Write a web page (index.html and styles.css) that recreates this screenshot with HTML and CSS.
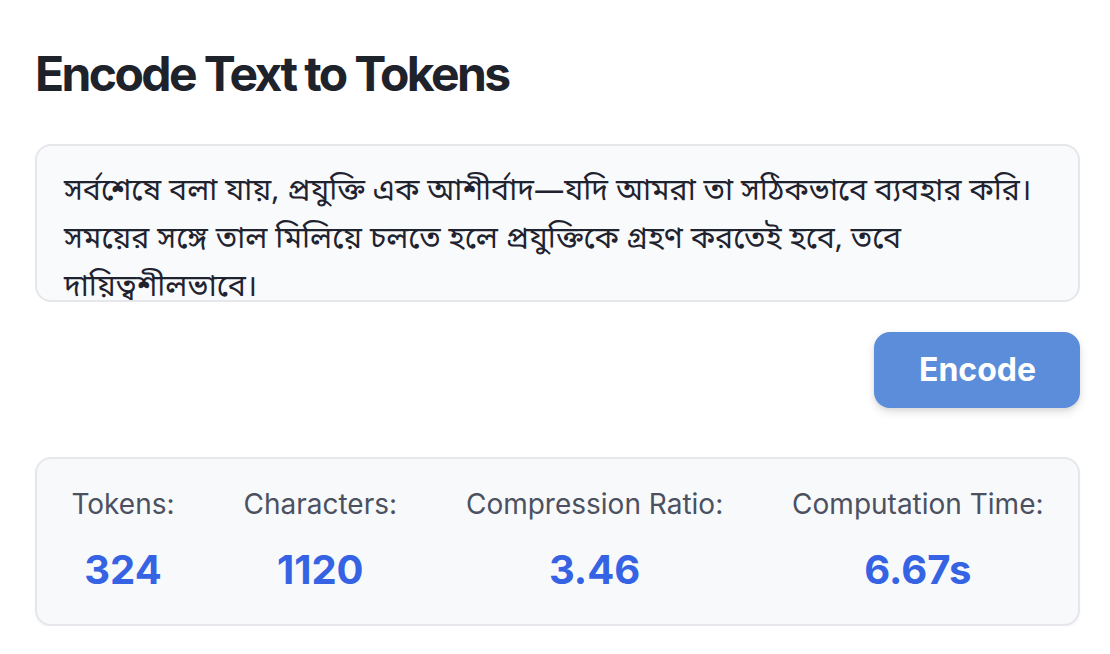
FILE: index.html
```html
<!DOCTYPE html>
<html lang="bn">
<head>
<meta charset="utf-8">
<title>Encode Text to Tokens</title>
<link rel="stylesheet" href="styles.css">
</head>
<body>
<main class="page">
  <h1 class="title">Encode Text to Tokens</h1>
  <textarea class="input" rows="3">সর্বশেষে বলা যায়, প্রযুক্তি এক আশীর্বাদ—যদি আমরা তা সঠিকভাবে ব্যবহার করি। সময়ের সঙ্গে তাল মিলিয়ে চলতে হলে প্রযুক্তিকে গ্রহণ করতেই হবে, তবে দায়িত্বশীলভাবে।</textarea>
  <div class="actions">
    <button class="btn" type="button">Encode</button>
  </div>
  <section class="stats">
    <div class="stat">
      <div class="label">Tokens:</div>
      <div class="value">324</div>
    </div>
    <div class="stat">
      <div class="label">Characters:</div>
      <div class="value">1120</div>
    </div>
    <div class="stat">
      <div class="label">Compression Ratio:</div>
      <div class="value">3.46</div>
    </div>
    <div class="stat">
      <div class="label">Computation Time:</div>
      <div class="value">6.67s</div>
    </div>
  </section>
</main>
</body>
</html>
```

FILE: styles.css
```css
* { box-sizing: border-box; }
html, body { margin: 0; padding: 0; background: #ffffff; }
body {
  font-family: Inter, "Liberation Sans", sans-serif;
  color: #1f2330;
}
.page {
  margin-left: 35px;
  width: 1045px;
  padding-top: 42px;
}
.title {
  margin: 0;
  font-size: 48px;
  line-height: 64px;
  font-weight: 700;
  color: #1e222b;
  letter-spacing: -2.6px;
}
.input {
  display: block;
  margin-top: 38px;
  width: 100%;
  height: 158px;
  padding: 22px 20px 22px 27px;
  border: 2px solid #e5e7eb;
  border-radius: 16px;
  background: #f9fafb;
  font-family: "Noto Sans Bengali", "Lohit Bengali", "Noto Sans", sans-serif;
  font-size: 30.3px;
  line-height: 48px;
  color: #1f2330;
  resize: none;
  overflow: hidden;
  outline: none;
}
.actions {
  display: flex;
  justify-content: flex-end;
  margin-top: 30px;
}
.btn {
  font-family: Inter, "Liberation Sans", sans-serif;
  font-size: 32px;
  line-height: 48px;
  font-weight: 700;
  color: #ffffff;
  background: #5b8ddb;
  border: none;
  border-radius: 16px;
  padding: 14px 44px 14px 45px;
  box-shadow: 0 4px 10px rgba(0, 0, 0, 0.12), 0 2px 4px rgba(0, 0, 0, 0.06);
}
.stats {
  margin-top: 49px;
  display: flex;
  justify-content: space-around;
  padding: 25px 0 26px;
  border: 2px solid #e5e7eb;
  border-radius: 16px;
  background: #f8f9fb;
  box-shadow: 0 2px 2px rgba(0, 0, 0, 0.04);
}
.stat {
  display: flex;
  flex-direction: column;
  align-items: center;
}
.label {
  font-size: 28px;
  line-height: 40px;
  color: #4b5160;
}
.value {
  margin-top: 18px;
  font-size: 40px;
  line-height: 56px;
  font-weight: 700;
  color: #3563e4;
}
```
